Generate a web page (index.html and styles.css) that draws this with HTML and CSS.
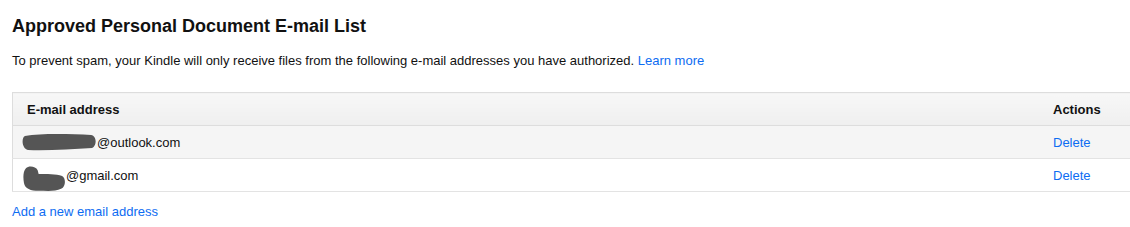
FILE: index.html
```html
<!DOCTYPE html>
<html lang="en">
<head>
    <meta charset="UTF-8">
    <meta name="viewport" content="width=device-width, initial-scale=1.0">
    <title>Approved Personal Document E-mail List</title>
    <link rel="stylesheet" href="styles.css">
</head>
<body>
    <div class="container">
        <h1 class="title">Approved Personal Document E-mail List</h1>
        <p class="intro">To prevent spam, your Kindle will only receive files from the following e-mail addresses you have authorized. <a href="#" class="link">Learn more</a></p>

        <table class="email-table">
            <thead>
                <tr>
                    <th class="col-email">E-mail address</th>
                    <th class="col-actions">Actions</th>
                </tr>
            </thead>
            <tbody>
                <tr class="row-alt">
                    <td class="col-email">
                        <svg class="redact redact-long" width="75" height="17" viewBox="0 0 76 17">
                            <path d="M3 2 C20 -1 50 0 70 1 C76 2 76 12 71 14 C50 15 25 17 6 16 C0 15 -1 4 3 2 Z" fill="#555"/>
                        </svg>@outlook.com
                    </td>
                    <td class="col-actions"><a href="#" class="link">Delete</a></td>
                </tr>
                <tr>
                    <td class="col-email">
                        <svg class="redact redact-short" width="43" height="26" viewBox="0 0 44 26">
                            <path d="M3 2 C6 -1 13 0 15 4 L16 8 C24 8 34 8 40 10 C44 12 44 21 39 23 C33 26 24 25 16 25 C8 25 2 23 1 17 C0 12 0 5 3 2 Z" fill="#555"/>
                        </svg>@gmail.com
                    </td>
                    <td class="col-actions"><a href="#" class="link">Delete</a></td>
                </tr>
            </tbody>
        </table>

        <a href="#" class="link add-link">Add a new email address</a>
    </div>
</body>
</html>
```

FILE: styles.css
```css
body {
    margin: 0;
    background: #fff;
    font-family: Arial, "Liberation Sans", sans-serif;
    color: #111;
}
.container {
    padding: 0 0 0 12px;
    overflow: hidden;
}
.title {
    font-size: 18px;
    font-weight: bold;
    margin: 14px 0 0;
    line-height: 24px;
}
.intro {
    font-size: 13px;
    margin: 15px 0 0;
    line-height: 16px;
}
.link {
    color: #0d6cf2;
    text-decoration: none;
}
.email-table {
    width: calc(100% + 20px);
    border-collapse: collapse;
    margin-top: 23px;
    font-size: 13px;
    border: 1px solid #ddd;
}
.email-table th {
    height: 32px;
    text-align: left;
    font-weight: bold;
    background: linear-gradient(#f7f7f7, #efefef);
    border-bottom: 1px solid #ddd;
    padding: 0 14px;
}
.email-table td {
    height: 32px;
    padding: 0 9px;
    border-bottom: 1px solid #e3e3e3;
}
.email-table .col-actions {
    width: 82px;
    padding-left: 0;
}
.row-alt td {
    background: #f5f5f5;
}
.redact {
    vertical-align: middle;
    margin: -8px 0;
}
.redact-long {
    position: relative;
    top: -1px;
}
.redact-short {
    position: relative;
    top: 3px;
    margin-left: 1px;
}
.add-link {
    display: inline-block;
    font-size: 13px;
    margin-top: 12px;
}
```
